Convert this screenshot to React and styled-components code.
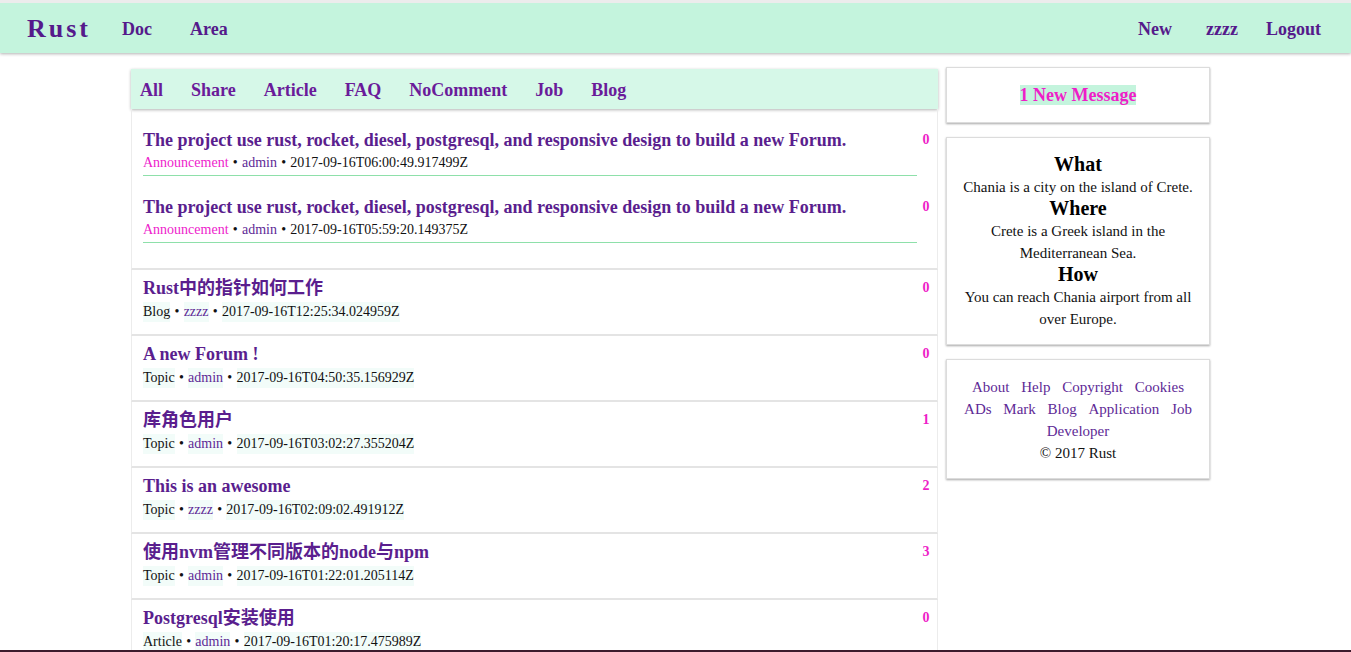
import styled, { createGlobalStyle } from "styled-components";

const GlobalStyle = createGlobalStyle`
    html, body {
        margin: 0;
        padding: 0;
        background: #fff;
    }
    body {
        font-family: "Liberation Serif", "Noto Sans CJK SC", serif;
        border-top: 3px solid #ececec;
        overflow: hidden;
    }
    a {
        text-decoration: none;
    }
`;

const Navbar = styled.nav`
    box-sizing: border-box;
    height: 50px;
    padding: 2px 30px 0 27px;
    background-color: #c4f4dd;
    box-shadow: 0 1px 3px rgba(0, 0, 0, 0.3);
    display: flex;
    align-items: center;
`;

const Brand = styled.a`
    font-size: 26px;
    font-weight: 700;
    letter-spacing: 3px;
    color: #551a8b;
`;

const NavLink = styled.a`
    font-size: 18px;
    font-weight: 700;
    color: #551a8b;
    margin-left: ${(p) => p.$space}px;
`;

const Spacer = styled.div`
    flex: 1;
`;

const Page = styled.div`
    width: 1089px;
    margin: 14px auto 0;
    padding-right: 10px;
    box-sizing: border-box;
    display: flex;
    align-items: flex-start;
    gap: 8px;
`;

const Main = styled.main`
    width: 807px;
    margin-top: 2px;
`;

const Tabs = styled.ul`
    list-style: none;
    margin: 0;
    box-sizing: border-box;
    height: 40px;
    padding: 2px 0 0 9px;
    display: flex;
    align-items: center;
    background-color: #d6f8e8;
    box-shadow: 0 1px 3px rgba(0, 0, 0, 0.3);
`;

const Tab = styled.li`
    margin-right: 28px;
    font-size: 18px;
    font-weight: 700;
    color: #6a1b9a;
`;

const Card = styled.section`
    border-left: 1px solid #ececec;
    border-right: 1px solid #ececec;
    border-bottom: 2px solid #e4e4e4;
    padding: ${(p) => (p.$pinned ? "0 0 25px" : "7px 0 9px")};
`;

const Item = styled.div`
    display: flex;
    align-items: flex-start;
    padding-top: ${(p) => (p.$pinned ? "20px" : "0")};
`;

const Body = styled.div`
    flex: 1;
    margin-left: 11px;
    border-bottom: ${(p) => (p.$pinned ? "1px solid #8ee0aa" : "none")};
`;

const Title = styled.a`
    display: block;
    font-size: 18px;
    line-height: 22px;
    font-weight: 700;
    color: #5a1e8e;
`;

const Meta = styled.div`
    font-size: 14px;
    line-height: ${(p) => (p.$pinned ? "24px" : "26px")};
    color: #111;
`;

const Chip = styled.span`
    display: inline-block;
    line-height: 20px;
    background-color: ${(p) => (p.$tinted ? "#f2fcf9" : "transparent")};
    color: ${(p) => p.$color || "#111"};
`;

const Dot = styled.span`
    margin: 0 0.75px;
`;

const Count = styled.span`
    width: 18px;
    padding-right: 2px;
    text-align: center;
    font-size: 14px;
    line-height: 22px;
    font-weight: 700;
    color: #ee1ec8;
`;

const Side = styled.aside`
    width: 264px;
    display: flex;
    flex-direction: column;
    gap: 14px;
`;

const Box = styled.div`
    border: 1px solid #dcdcdc;
    box-shadow: 0 1px 2px rgba(0, 0, 0, 0.35);
    text-align: center;
    padding: ${(p) => p.$pad || "16px 12px 14px"};
    font-size: 15px;
    line-height: ${(p) => p.$lh || "22px"};
    color: #111;
`;

const Message = styled.span`
    font-size: 18px;
    font-weight: 700;
    color: #ee1ec8;
    background-color: #c4f4dd;
`;

const InfoHead = styled.h3`
    margin: 0 0 2px;
    font-size: 20px;
    line-height: 20px;
    font-weight: 700;
    color: #000;
`;

const InfoText = styled.p`
    margin: 0;
`;

const FootLink = styled.a`
    display: inline-block;
    margin: 0 4px;
    color: #5e2a96;
`;

const BottomBar = styled.div`
    position: fixed;
    left: 0;
    right: 0;
    bottom: 0;
    height: 2px;
    background-color: #3c1b2c;
`;

const tabs = ["All", "Share", "Article", "FAQ", "NoComment", "Job", "Blog"];

const pinned = [
    { date: "2017-09-16T06:00:49.917499Z" },
    { date: "2017-09-16T05:59:20.149375Z" },
];

const posts = [
    { title: "Rust中的指针如何工作", kind: "Blog", user: "zzzz", date: "2017-09-16T12:25:34.024959Z", count: 0 },
    { title: "A new Forum !", kind: "Topic", user: "admin", date: "2017-09-16T04:50:35.156929Z", count: 0 },
    { title: "库角色用户", kind: "Topic", user: "admin", date: "2017-09-16T03:02:27.355204Z", count: 1 },
    { title: "This is an awesome", kind: "Topic", user: "zzzz", date: "2017-09-16T02:09:02.491912Z", count: 2 },
    { title: "使用nvm管理不同版本的node与npm", kind: "Topic", user: "admin", date: "2017-09-16T01:22:01.205114Z", count: 3 },
    { title: "Postgresql安装使用", kind: "Article", user: "admin", date: "2017-09-16T01:20:17.475989Z", count: 0 },
];

const footLinks = ["About", "Help", "Copyright", "Cookies", "ADs", "Mark", "Blog", "Application", "Job", "Developer"];

export default function App() {
    return (
        <>
            <GlobalStyle />
            <Navbar>
                <Brand>Rust</Brand>
                <NavLink $space={31}>Doc</NavLink>
                <NavLink $space={38}>Area</NavLink>
                <Spacer />
                <NavLink $space={0}>New</NavLink>
                <NavLink $space={34}>zzzz</NavLink>
                <NavLink $space={28}>Logout</NavLink>
            </Navbar>
            <Page>
                <Main>
                    <Tabs>
                        {tabs.map((t) => (
                            <Tab key={t}>{t}</Tab>
                        ))}
                    </Tabs>
                    <Card $pinned>
                        {pinned.map((p) => (
                            <Item $pinned key={p.date}>
                                <Body $pinned>
                                    <Title>
                                        The project use rust, rocket, diesel, postgresql, and responsive design to build a new
                                        Forum.
                                    </Title>
                                    <Meta $pinned>
                                        <Chip $color="#ee22cc">Announcement</Chip> <Dot>•</Dot>{" "}
                                        <Chip $color="#5e2a96">admin</Chip> <Dot>•</Dot> <Chip>{p.date}</Chip>
                                    </Meta>
                                </Body>
                                <Count>0</Count>
                            </Item>
                        ))}
                    </Card>
                    {posts.map((p) => (
                        <Card key={p.date}>
                            <Item>
                                <Body>
                                    <Title>{p.title}</Title>
                                    <Meta>
                                        <Chip $tinted>{p.kind}</Chip> <Dot>•</Dot>{" "}
                                        <Chip $tinted $color="#5e2a96">
                                            {p.user}
                                        </Chip>{" "}
                                        <Dot>•</Dot> <Chip $tinted>{p.date}</Chip>
                                    </Meta>
                                </Body>
                                <Count>{p.count}</Count>
                            </Item>
                        </Card>
                    ))}
                </Main>
                <Side>
                    <Box $pad="17px 14px 16px" $lh="20px">
                        <Message>1 New Message</Message>
                    </Box>
                    <Box>
                        <InfoHead>What</InfoHead>
                        <InfoText>Chania is a city on the island of Crete.</InfoText>
                        <InfoHead>Where</InfoHead>
                        <InfoText>Crete is a Greek island in the Mediterranean Sea.</InfoText>
                        <InfoHead>How</InfoHead>
                        <InfoText>You can reach Chania airport from all over Europe.</InfoText>
                    </Box>
                    <Box>
                        {footLinks.map((l) => (
                            <span key={l}>
                                <FootLink>{l}</FootLink>{" "}
                            </span>
                        ))}
                        <InfoText>© 2017 Rust</InfoText>
                    </Box>
                </Side>
            </Page>
            <BottomBar />
        </>
    );
}
